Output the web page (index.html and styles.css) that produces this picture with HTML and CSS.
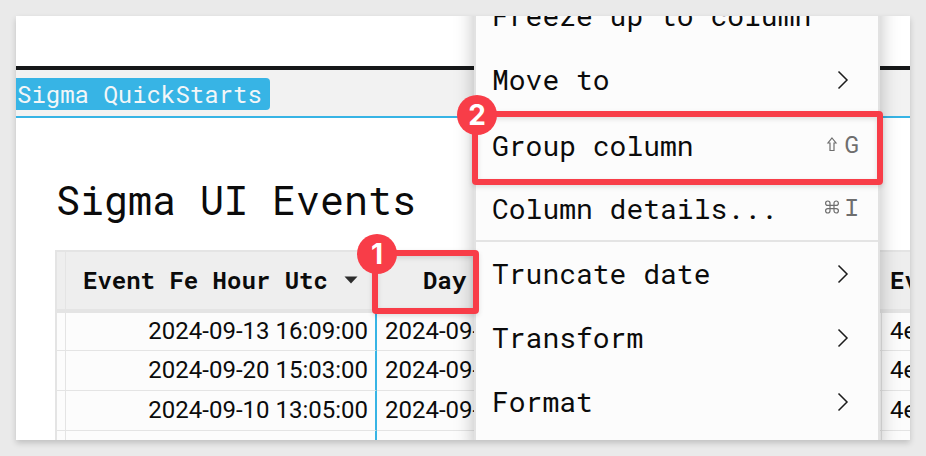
FILE: index.html
```html
<!DOCTYPE html>
<html lang="en">
<head>
<meta charset="utf-8">
<title>Sigma UI Events</title>
<link rel="stylesheet" href="styles.css">
</head>
<body>
<main class="card">
  <div class="topbar"></div>
  <nav class="tabs"><a class="chip" href="#">Sigma QuickStarts</a></nav>
  <section class="sheet">
    <h1 class="title">Sigma UI Events</h1>
    <table class="grid">
      <colgroup><col class="col-gutter"><col class="col-hour"><col class="col-day"><col></colgroup>
      <thead>
        <tr>
          <th class="gutter"></th>
          <th class="head-hour"><span class="head-label">Event Fe Hour Utc <svg class="caret" viewBox="0 0 14 8" aria-hidden="true"><path d="M.5 .5h13L7 7.500z"/></svg></span></th>
          <th class="head-day">Day</th>
          <th>Ev</th>
        </tr>
      </thead>
      <tbody>
        <tr><td class="gutter"></td><td class="hour">2024-09-13 16:09:00</td><td class="day">2024-09-</td><td>4e</td></tr>
        <tr><td class="gutter"></td><td class="hour">2024-09-20 15:03:00</td><td class="day">2024-09-</td><td>4e</td></tr>
        <tr><td class="gutter"></td><td class="hour">2024-09-10 13:05:00</td><td class="day">2024-09-</td><td>4e</td></tr>
        <tr><td class="gutter"></td><td class="hour"></td><td class="day"></td><td></td></tr>
      </tbody>
    </table>
  </section>

  <div class="menu" role="menu">
    <div class="menu-group">
      <button class="item" role="menuitem">Freeze up to column</button>
      <button class="item" role="menuitem">Move to <svg class="chevron" viewBox="0 0 30 20" aria-hidden="true"><path d="M10.500 1.500 19 10l-8.500 8.500"/></svg></button>
    </div>
    <div class="menu-group compact">
      <button class="item" role="menuitem">Group column <span class="keys"><svg class="key-icon" viewBox="0 0 16 16" aria-hidden="true"><path d="M8 2 12 7H10V14.500H6V7H4Z"/></svg>G</span></button>
      <button class="item" role="menuitem">Column details... <span class="keys"><svg class="key-icon" viewBox="0 0 16 16" aria-hidden="true"><path d="M6 4.200A2.200 2.200 0 1 0 3.800 6.400H12.200A2.200 2.200 0 1 0 10 4.200V11.800A2.200 2.200 0 1 0 12.200 9.600H3.800A2.200 2.200 0 1 0 6 11.800Z"/></svg>I</span></button>
    </div>
    <div class="menu-group">
      <button class="item" role="menuitem">Truncate date <svg class="chevron" viewBox="0 0 30 20" aria-hidden="true"><path d="M10.500 1.500 19 10l-8.500 8.500"/></svg></button>
      <button class="item" role="menuitem">Transform <svg class="chevron" viewBox="0 0 30 20" aria-hidden="true"><path d="M10.500 1.500 19 10l-8.500 8.500"/></svg></button>
      <button class="item" role="menuitem">Format <svg class="chevron" viewBox="0 0 30 20" aria-hidden="true"><path d="M10.500 1.500 19 10l-8.500 8.500"/></svg></button>
    </div>
  </div>

  <div class="callout callout-day"><span class="badge">1</span></div>
  <div class="callout callout-group"><span class="badge">2</span></div>
</main>
</body>
</html>
```

FILE: styles.css
```css
:root {
  --mono: "Roboto Mono", "DejaVu Sans Mono", monospace;
  --line: #e4e4e4;
  --blue: #37b4e5;
  --red: #f83d48;
  --ink: #0b0b0b;
}

* { box-sizing: border-box; }

body {
  margin: 0;
  padding: 16px;
  height: 100vh;
  background: #eaeaea;
  color: var(--ink);
  font-family: Roboto, sans-serif;
  font-size: 24px;
}

.card {
  position: relative;
  height: 100%;
  overflow: hidden;
  background: #fff;
}

body::before {
  content: "";
  position: absolute;
  inset: 16px;
  box-shadow: 0 3px 6px rgba(0, 0, 0, .18);
}

.topbar {
  height: 54px;
  border-bottom: 4px solid #161819;
}

.tabs {
  display: flex;
  padding: 8px 0 6px;
  background: #f2f2f2;
  border-bottom: 2px solid var(--blue);
}

.chip {
  padding: 0 8px 0 1px;
  border-radius: 0 4px 4px 0;
  background: var(--blue);
  color: #f2f6f8;
  font: 24px/32px var(--mono);
  text-decoration: none;
}

.sheet { padding-left: 39px; }

.title {
  margin: 0;
  padding: 58px 0 26px 1px;
  font: 40px/48px var(--mono);
}

.grid {
  width: 100%;
  table-layout: fixed;
  border-collapse: separate;
  border-spacing: 0;
  border-left: 2px solid var(--line);
  background: #fcfcfc;
}

.col-gutter { width: 9px; }
.col-hour { width: 311px; }
.col-day { width: 505px; }

th, td {
  padding: 0 8px 2px;
  white-space: nowrap;
  text-align: left;
}

th {
  height: 61px;
  border-top: 2px solid var(--line);
  border-bottom: 2px solid var(--line);
  background: #eee;
  font: bold 24px/32px var(--mono);
}

td {
  height: 40px;
  border-bottom: 1px solid var(--line);
  line-height: 32px;
}

tbody tr:first-child td {
  border-top: 2px solid var(--line);
}

.gutter {
  padding: 0;
  border-right: 1px solid var(--line);
}

.head-hour { padding-left: 17px; }

.head-label {
  display: flex;
  align-items: center;
  gap: 16px;
}

.caret {
  width: 14px;
  height: 8px;
  fill: #2c2c2c;
}

.head-day { padding-left: 46px; }

.hour {
  padding-right: 7px;
  border-right: 2px solid var(--blue);
  text-align: right;
}

.day { border-right: 1px solid var(--line); }

.menu {
  position: absolute;
  top: -32px;
  left: 458px;
  width: 406px;
  border: 2px solid #e2e2e2;
  border-top: 0;
  background: #fcfcfc;
  box-shadow: 0 2px 18px rgba(0, 0, 0, .26);
}

.menu-group + .menu-group { border-top: 2px solid var(--line); }

.menu-group:last-child { padding-bottom: 16px; }

.item {
  display: flex;
  align-items: center;
  justify-content: space-between;
  width: 100%;
  height: 64px;
  padding: 0 20px 0 16px;
  border: 0;
  background: none;
  color: inherit;
  font: 28px/36px var(--mono);
  text-align: left;
  white-space: nowrap;
}

.compact .item {
  height: 63px;
  padding-right: 19px;
}

.chevron {
  width: 30px;
  height: 20px;
  fill: none;
  stroke: #1c1c1c;
  stroke-width: 1.5;
}

.keys {
  display: flex;
  align-items: center;
  gap: 5px;
  padding-bottom: 3px;
  color: #6e6e6e;
  font-size: 24px;
}

.key-icon {
  width: 16px;
  height: 16px;
  fill: none;
  stroke: #6e6e6e;
  stroke-width: 1.2;
}

.callout {
  position: absolute;
  border: 6px solid var(--red);
  border-radius: 4px;
  box-shadow: 0 2px 5px rgba(0, 0, 0, .12), inset 0 2px 5px rgba(0, 0, 0, .12);
}

.callout-day {
  top: 234px;
  left: 356px;
  width: 107px;
  height: 64px;
}

.callout-group {
  top: 95px;
  left: 456px;
  width: 411px;
  height: 74px;
}

.badge {
  position: absolute;
  top: -22px;
  left: -21px;
  width: 40px;
  height: 40px;
  border-radius: 50%;
  background: var(--red);
  color: #fff;
  font: bold 28px/40px Inter, sans-serif;
  text-align: center;
}
```
